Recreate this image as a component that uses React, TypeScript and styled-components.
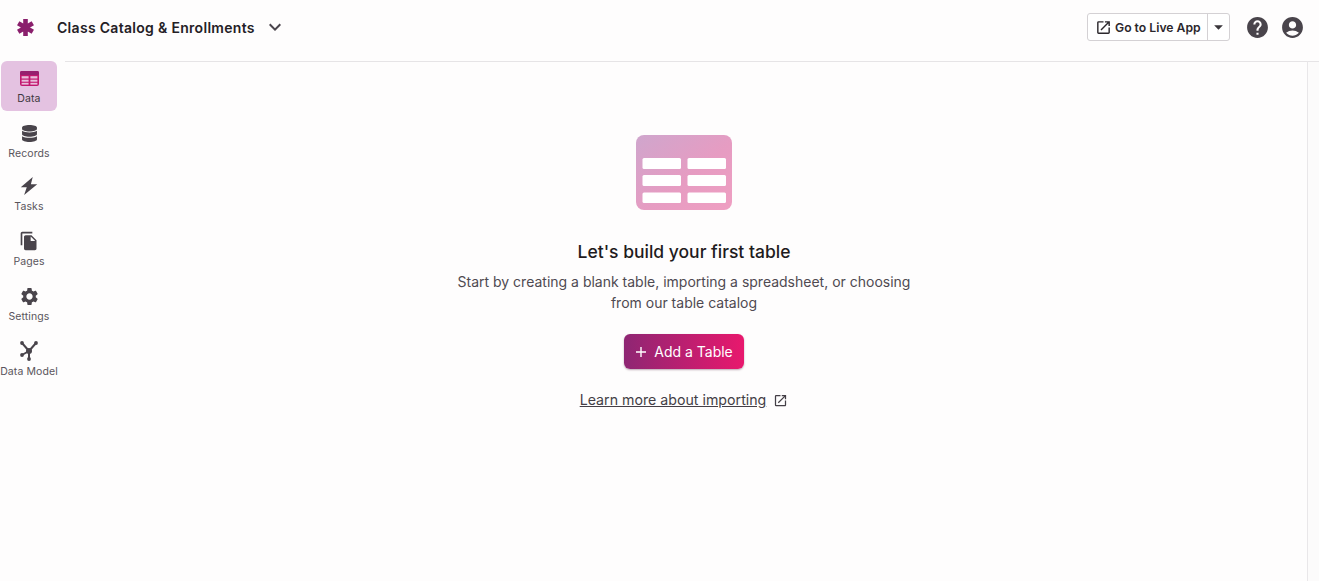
import styled, { createGlobalStyle } from "styled-components";
import { FaDatabase } from "react-icons/fa";
import {
  MdAccountCircle,
  MdArrowDropDown,
  MdFileCopy,
  MdHelp,
  MdKeyboardArrowDown,
  MdOpenInNew,
  MdSettings,
} from "react-icons/md";

const GlobalStyle = createGlobalStyle`
  html, body {
    margin: 0;
    height: 100%;
    background: #fefdfd;
    font-family: Inter, "Liberation Sans", sans-serif;
    color: #1f1b20;
  }
  * {
    box-sizing: border-box;
  }
`;

const Page = styled.div`
  width: 1319px;
  height: 581px;
  display: flex;
  flex-direction: column;
  overflow: hidden;
`;

const Header = styled.header`
  height: 61px;
  flex: none;
  display: flex;
  align-items: center;
  padding: 0 14px 7px 16px;
`;

const Title = styled.h1`
  margin: 0 0 0 22px;
  font-size: 14px;
  font-weight: 600;
  letter-spacing: 0.3px;
  color: #242025;
`;

const TitleCaret = styled(MdKeyboardArrowDown)`
  margin-left: 8px;
  font-size: 24px;
  color: #4a454c;
`;

const HeaderActions = styled.div`
  margin-left: auto;
  display: flex;
  align-items: center;
`;

const LiveAppGroup = styled.div`
  display: flex;
  height: 28px;
  margin-right: 15px;
  border: 1px solid #d4d1d4;
  border-radius: 3px;
  background: #fff;
`;

const LiveAppButton = styled.button`
  width: 120px;
  display: flex;
  align-items: center;
  gap: 3px;
  padding: 0 0 0 7px;
  border: 0;
  border-right: 1px solid #d4d1d4;
  background: none;
  font: 600 12.2px Inter, sans-serif;
  color: #2b272c;
  white-space: nowrap;
  svg {
    font-size: 17px;
  }
`;

const LiveAppMenu = styled.button`
  width: 21px;
  display: flex;
  align-items: center;
  justify-content: center;
  padding: 0;
  border: 0;
  background: none;
  color: #39353a;
  font-size: 22px;
`;

const RoundIcon = styled.span<{ $gap?: number }>`
  display: flex;
  margin-left: ${(p) => p.$gap ?? 0}px;
  font-size: 25px;
  color: #49444b;
`;

const Body = styled.div`
  flex: 1;
  display: flex;
  min-height: 0;
`;

const Sidebar = styled.nav`
  width: 65px;
  flex: none;
  display: flex;
  flex-direction: column;
  gap: 5px;
  padding-left: 1px;
`;

const NavItem = styled.a<{ $active?: boolean; $height?: number }>`
  width: 56px;
  height: ${(p) => p.$height ?? 50}px;
  display: flex;
  flex-direction: column;
  align-items: center;
  padding-top: 7px;
  border-radius: 6px;
  background: ${(p) => (p.$active ? "#e4c2e1" : "transparent")};
  color: #49444b;
`;

const NavIcon = styled.span`
  height: 20px;
  display: flex;
  align-items: center;
  justify-content: center;
  font-size: 20px;
`;

const NavLabel = styled.span<{ $active?: boolean }>`
  margin-top: 3px;
  font-size: 10.5px;
  line-height: 16px;
  white-space: nowrap;
  letter-spacing: 0.1px;
  color: ${(p) => (p.$active ? "#3d383e" : "#5a555c")};
`;

const Main = styled.main`
  flex: 1;
  display: flex;
  flex-direction: column;
  align-items: center;
  padding: 72px 4px 0 0;
  border-top: 1px solid #e6e4e6;
`;

const RightRail = styled.aside`
  width: 12px;
  flex: none;
  border-top: 1px solid #e6e4e6;
  border-left: 1px solid #e9e7e9;
  background: #fcfbfb;
`;

const Heading = styled.h2`
  margin: 28px 0 0;
  font-size: 17.5px;
  line-height: 26px;
  font-weight: 500;
  color: #1f1b20;
`;

const Description = styled.p`
  width: 470px;
  margin: 6px 0 0;
  font-size: 14px;
  line-height: 21px;
  text-align: center;
  color: #4f4a51;
`;

const AddButton = styled.button`
  width: 120px;
  height: 35px;
  margin-top: 21px;
  display: flex;
  align-items: center;
  justify-content: center;
  gap: 7px;
  border: 0;
  border-radius: 6px;
  background: linear-gradient(90deg, #8e2673, #e8186d);
  box-shadow: 0 1px 2px rgba(60, 10, 40, 0.35);
  color: #fff;
  font: 400 14px Inter, sans-serif;
  white-space: nowrap;
`;

const Learn = styled.a`
  margin-top: 21px;
  display: flex;
  align-items: center;
  gap: 7px;
  font-size: 14.2px;
  line-height: 20px;
  color: #443f46;
  span {
    text-decoration: underline;
  }
  svg {
    font-size: 15px;
  }
`;

const LogoMark = () => (
  <svg width="19" height="19" viewBox="0 0 19 19" stroke="#8a1f6c" strokeWidth="4.6">
    <path d="M9.5 1v17M2.2 5.2l14.6 8.6M2.2 13.8l14.6-8.6" />
  </svg>
);

const DataGlyph = () => (
  <svg width="19" height="15" viewBox="0 0 19 15">
    <rect width="19" height="15" rx="2" fill="#c2186f" />
    <rect width="19" height="4" rx="1.5" fill="#97206f" />
    <g fill="#e9bfdc">
      <rect x="1.6" y="5.2" width="7" height="2.3" />
      <rect x="10.4" y="5.2" width="7" height="2.3" />
      <rect x="1.6" y="8.7" width="7" height="2" />
      <rect x="10.4" y="8.7" width="7" height="2" />
      <rect x="1.6" y="11.8" width="7" height="1.8" />
      <rect x="10.4" y="11.8" width="7" height="1.8" />
    </g>
  </svg>
);

const BoltGlyph = () => (
  <svg width="18" height="18" viewBox="0 0 24 24" fill="currentColor">
    <path d="M17 0 1 13.5h8L5.5 24 23 9.5h-8.5L17 0z" />
  </svg>
);

const ModelGlyph = () => (
  <svg width="20" height="22" viewBox="0 0 20 22" fill="#49444b" stroke="#49444b">
    <path d="M10 11 3 3M10 11l7-8M10 11l-7 4M10 11l0 8" strokeWidth="2" />
    <circle cx="10" cy="11" r="3" stroke="none" />
    <circle cx="3" cy="3" r="1.9" stroke="none" />
    <circle cx="17" cy="3" r="1.9" stroke="none" />
    <circle cx="3" cy="15" r="1.9" stroke="none" />
    <circle cx="10" cy="19" r="1.9" stroke="none" />
  </svg>
);

const TableIllustration = () => (
  <svg width="98" height="77" viewBox="0 0 98 77">
    <defs>
      <linearGradient id="tableFill" x1="0" y1="0" x2="1" y2="1">
        <stop offset="0" stopColor="#cfa6cd" />
        <stop offset="0.55" stopColor="#e69cc2" />
        <stop offset="1" stopColor="#ef9fc2" />
      </linearGradient>
    </defs>
    <rect x="1" y="1" width="96" height="75" rx="8" fill="url(#tableFill)" />
    <g fill="#fff">
      <rect x="7.5" y="24" width="38.5" height="11" rx="1.5" />
      <rect x="52.5" y="24" width="38.5" height="11" rx="1.5" />
      <rect x="7.5" y="41" width="38.5" height="11" rx="1.5" />
      <rect x="52.5" y="41" width="38.5" height="11" rx="1.5" />
      <rect x="7.5" y="58.5" width="38.5" height="10.5" rx="1.5" />
      <rect x="52.5" y="58.5" width="38.5" height="10.5" rx="1.5" />
    </g>
  </svg>
);

const navItems = [
  { label: "Data", icon: <DataGlyph />, active: true },
  { label: "Records", icon: <FaDatabase size={17} />, height: 48 },
  { label: "Tasks", icon: <BoltGlyph /> },
  { label: "Pages", icon: <MdFileCopy size={20} /> },
  { label: "Settings", icon: <MdSettings size={21} /> },
  { label: "Data Model", icon: <ModelGlyph /> },
];

export default function App() {
  return (
    <Page>
      <GlobalStyle />
      <Header>
        <LogoMark />
        <Title>Class Catalog &amp; Enrollments</Title>
        <TitleCaret />
        <HeaderActions>
          <LiveAppGroup>
            <LiveAppButton>
              <MdOpenInNew />
              Go to Live App
            </LiveAppButton>
            <LiveAppMenu>
              <MdArrowDropDown />
            </LiveAppMenu>
          </LiveAppGroup>
          <RoundIcon>
            <MdHelp />
          </RoundIcon>
          <RoundIcon $gap={10}>
            <MdAccountCircle />
          </RoundIcon>
        </HeaderActions>
      </Header>
      <Body>
        <Sidebar>
          {navItems.map((item) => (
            <NavItem key={item.label} $active={item.active} $height={item.height}>
              <NavIcon>{item.icon}</NavIcon>
              <NavLabel $active={item.active}>{item.label}</NavLabel>
            </NavItem>
          ))}
        </Sidebar>
        <Main>
          <TableIllustration />
          <Heading>Let's build your first table</Heading>
          <Description>
            Start by creating a blank table, importing a spreadsheet, or choosing from our table
            catalog
          </Description>
          <AddButton>
            <svg width="12" height="12" viewBox="0 0 12 12" stroke="#fff" strokeWidth="1.4">
              <path d="M6 1v10M1 6h10" />
            </svg>
            Add a Table
          </AddButton>
          <Learn>
            <span>Learn more about importing</span>
            <MdOpenInNew />
          </Learn>
        </Main>
        <RightRail />
      </Body>
    </Page>
  );
}
